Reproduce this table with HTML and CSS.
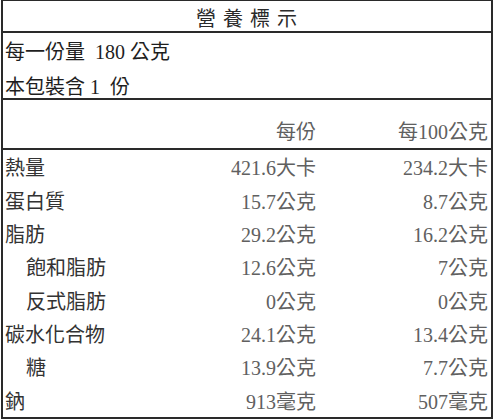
FILE: index.html
```html
<!DOCTYPE html>
<html lang="zh-Hant">
<head>
<meta charset="utf-8">
<title>營養標示</title>
<link rel="stylesheet" href="styles.css">
</head>
<body>
<div class="label">
  <div class="title">營 養 標 示</div>
  <div class="serving">
    <div class="line">每一份量&nbsp; 180 公克</div>
    <div class="line">本包裝含 1&nbsp; 份</div>
  </div>
  <div class="head row">
    <span></span>
    <span class="val">每份</span>
    <span class="val">每100公克</span>
  </div>
  <div class="rows">
    <div class="row"><span class="name">熱量</span><span class="val">421.6大卡</span><span class="val">234.2大卡</span></div>
    <div class="row"><span class="name">蛋白質</span><span class="val">15.7公克</span><span class="val">8.7公克</span></div>
    <div class="row"><span class="name">脂肪</span><span class="val">29.2公克</span><span class="val">16.2公克</span></div>
    <div class="row"><span class="name sub">飽和脂肪</span><span class="val">12.6公克</span><span class="val">7公克</span></div>
    <div class="row"><span class="name sub">反式脂肪</span><span class="val">0公克</span><span class="val">0公克</span></div>
    <div class="row"><span class="name">碳水化合物</span><span class="val">24.1公克</span><span class="val">13.4公克</span></div>
    <div class="row"><span class="name sub">糖</span><span class="val">13.9公克</span><span class="val">7.7公克</span></div>
    <div class="row"><span class="name">鈉</span><span class="val">913毫克</span><span class="val">507毫克</span></div>
  </div>
</div>
</body>
</html>
```
FILE: styles.css
```css
html, body {
  margin: 0;
  padding: 0;
  background: #ffffff;
}
body {
  font-family: "Liberation Serif", "Noto Sans CJK TC", serif;
  color: #222;
  font-size: 20px;
}
.label {
  margin-left: 1px;
  width: 488px;
  height: 416px;
  border: 2px solid #2a2a2a;
  border-top-width: 1px;
  display: flex;
  flex-direction: column;
}
.title {
  height: 32px;
  box-sizing: border-box;
  padding-top: 4px;
  line-height: 28px;
  text-align: center;
  letter-spacing: 1px;
  border-bottom: 2px solid #2a2a2a;
  color: #2a2a2a;
}
.serving {
  height: 67px;
  box-sizing: border-box;
  padding: 2px 0 0 2px;
  border-bottom: 2px solid #2a2a2a;
}
.serving .line {
  height: 35px;
  line-height: 35px;
  color: #1e1e1e;
}
.row {
  display: grid;
  grid-template-columns: 1fr 140px 172px;
  align-items: center;
  padding: 0 3px 0 2px;
}
.head {
  height: 50px;
  box-sizing: border-box;
  align-items: end;
  padding-bottom: 3px;
  border-bottom: 2px solid #2a2a2a;
}
.rows {
  flex: 1;
  display: grid;
  grid-template-rows: repeat(8, 1fr);
}
.name {
  color: #333;
}
.name.sub {
  padding-left: 21px;
}
.val {
  text-align: right;
  color: #606060;
}
```
